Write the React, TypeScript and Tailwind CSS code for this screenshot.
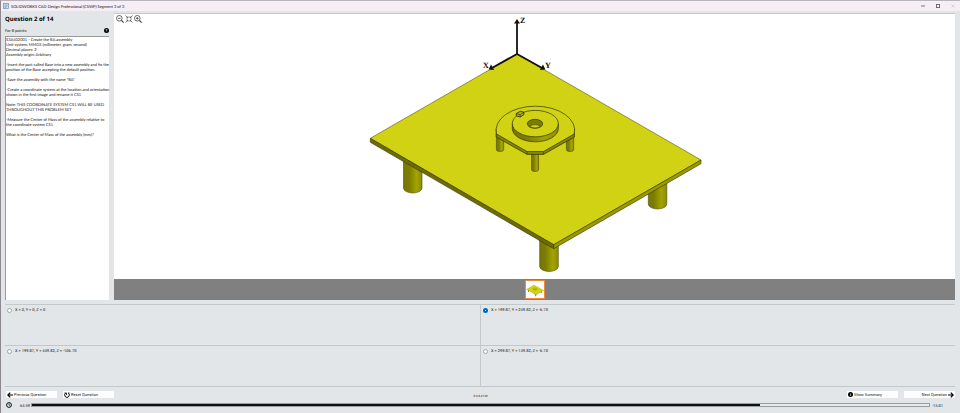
import { useState } from 'react';
import type { ReactNode } from 'react';

const ANSWERS = [
  'X = 0, Y = 0, Z = 0',
  'X = 199.87, Y = 249.82, Z = -6.70',
  'X = 199.87, Y = 449.82, Z = -106.70',
  'X = 299.87, Y = 149.82, Z = -6.70',
];

const QUESTION = `S3A402001 - Create the RA assembly
Unit system: MMGS (millimeter, gram, second)
Decimal places: 2
Assembly origin: Arbitrary

-Insert the part called Base into a new assembly and fix the
position of the Base accepting the default position.

-Save the assembly with the name "RA"

-Create a coordinate system at the location and orientation
shown in the first image and rename it CS1

Note: THIS COORDINATE SYSTEM CS1 WILL BE USED
THROUGHOUT THIS PROBLEM SET

-Measure the Center of Mass of the assembly relative to
the coordinate system CS1

What is the Center of Mass of the assembly (mm)?`;

function Leg({ x, top, width, bottom, ry }: { x: number; top: number; width: number; bottom: number; ry: number }) {
  const r = width / 2;
  return (
    <path
      d={`M${x} ${top}V${bottom - ry}A${r} ${ry} 0 0 0 ${x + width} ${bottom - ry}V${top}Z`}
      fill="url(#leg)"
      stroke="#4a4a08"
      strokeWidth="0.6"
    />
  );
}

function Assembly() {
  return (
    <g strokeLinejoin="round">
      <Leg x={403.5} top={155} width={18.5} bottom={193} ry={5} />
      <Leg x={539.7} top={236} width={18.6} bottom={271.5} ry={5} />
      <Leg x={648.3} top={180} width={18.5} bottom={209} ry={5} />
      <path d="M370.3 138.3 517 54l184 106L553.7 244.7Z" fill="#d1d214" stroke="#55550c" strokeWidth="0.6" />
      <path d="M370.3 138.3v4L553.7 248.7v-4Z" fill="#6d6d00" stroke="#33330a" strokeWidth="0.6" />
      <path d="M553.7 244.7v4L701 163.7V160Z" fill="#9b9b00" stroke="#33330a" strokeWidth="0.6" />

      <Leg x={496.4} top={133} width={7.3} bottom={151.5} ry={2} />
      <Leg x={566.4} top={133} width={7.3} bottom={151.5} ry={2} />
      <Leg x={531.5} top={150} width={7.1} bottom={171.5} ry={2} />
      <path
        d="M496.2 129v8L527 154.4h16.5L574.4 137v-8Z"
        fill="#858500"
        stroke="#33330a"
        strokeWidth="0.7"
      />
      {/* top face of the flange: round at the back, chamfered at the front */}
      <path
        d="M496.6 134A39.3 24 0 1 1 574.2 134L543.5 151.5H527Z"
        fill="#d1d214"
        stroke="#33330a"
        strokeWidth="0.7"
      />
      <path d="M527 151.5v3M543.5 151.5v3" stroke="#33330a" strokeWidth="0.6" />
      <path d="M512.3 123.6v5a23 13.2 0 0 0 46 0v-5Z" fill="url(#leg)" stroke="#33330a" strokeWidth="0.7" />
      <ellipse cx="535.3" cy="123.6" rx="23" ry="13.2" fill="#d1d214" stroke="#33330a" strokeWidth="0.7" />
      <ellipse cx="535" cy="123.8" rx="7.7" ry="4.5" fill="#7c7c00" stroke="#33330a" strokeWidth="0.7" />
      <path d="M529.5 126.2q5.5-3.2 11 0q-5.5 3.4-11 0Z" fill="#d1d214" stroke="#33330a" strokeWidth="0.5" />
      <path d="m516.3 113.5 4-2.2 3.5.9v2.6l-3.7 2.2-3.8-1.2Z" fill="#b5b60c" stroke="#222205" strokeWidth="0.8" />
      <path d="m516.3 113.5 3.8 1.2 3.7-2.3M520.1 114.7v2.3" fill="none" stroke="#222205" strokeWidth="0.6" />
    </g>
  );
}

function Drawing() {
  return (
    <svg viewBox="114 14 841 265" className="h-full w-full" role="img" aria-label="RA assembly">
      <defs>
        <linearGradient id="leg">
          <stop offset="0" stopColor="#77770a" />
          <stop offset="0.3" stopColor="#7c7c00" />
          <stop offset="0.7" stopColor="#a3a300" />
          <stop offset="1" stopColor="#8d8d00" />
        </linearGradient>
      </defs>
      <Assembly />
      <g stroke="#111" strokeWidth="1.8" fill="none">
        <path d="M517 54V22" />
        <path d="M517 54 491 68.5" />
        <path d="M517 54 543 68.5" />
      </g>
      <g fill="#111">
        <path d="m517 19 3 4.5h-6Z" />
        <path d="m488.6 69.6 2.4-5 3.2 5.3Z" />
        <path d="m545.4 69.6-2.4-5-3.2 5.3Z" />
      </g>
      <g fill="#111" className="font-['Liberation_Serif',serif] text-[8px] font-bold">
        <text x="520" y="23">Z</text>
        <text x="483" y="68">X</text>
        <text x="545" y="68">Y</text>
      </g>
    </svg>
  );
}

function Magnifier({ plus = false }: { plus?: boolean }) {
  return (
    <svg viewBox="0 0 8 8" className="size-2" fill="none" stroke="#444" strokeWidth="0.8">
      <circle cx="3.3" cy="3.3" r="2.8" />
      <path d="M2 3.3h2.6" />
      {plus && <path d="M3.3 2v2.6" />}
      <path d="m5.4 5.4 2.2 2.2" strokeWidth="1.2" />
    </svg>
  );
}

function FitIcon() {
  return (
    <svg viewBox="0 0 8 8" className="size-2" fill="none" stroke="#444" strokeWidth="0.7">
      <path d="M.5.5 3 3M7.5.5 5 3M.5 7.5 3 5M7.5 7.5 5 5" />
      <path d="M1.2 3H3V1.2M6.8 3H5V1.2M1.2 5H3v1.8M6.8 5H5v1.8" strokeWidth="0.6" />
    </svg>
  );
}

function ArrowIcon({ right = false }: { right?: boolean }) {
  return (
    <svg viewBox="0 0 6 6" className={right ? 'size-[6px] rotate-180' : 'size-[6px]'} fill="none" stroke="#000" strokeWidth="1.2">
      <path d="M6 3H.9M3.2.6.8 3l2.4 2.4" />
    </svg>
  );
}

function FooterButton({ children, end = false }: { children: ReactNode; end?: boolean }) {
  return (
    <button
      type="button"
      className={`flex h-[7px] w-[51px] items-center gap-px bg-[#fdfdfd] px-px whitespace-nowrap ${end ? 'justify-end' : ''}`}
    >
      {children}
    </button>
  );
}

export default function App() {
  const [selected, setSelected] = useState(1);

  return (
    <div className="flex h-screen flex-col border-t border-l border-t-[#b9b3bd] border-l-[#8d8790] bg-[#e2e6e9] font-[Roboto,sans-serif] text-[4px] leading-[5px] text-[#111] [text-rendering:geometricPrecision]">
      <header className="flex h-[10px] shrink-0 items-center bg-[#f5eef5] pl-[2px] font-[Lato,sans-serif]">
        <svg viewBox="0 0 6 6" className="size-[6px]">
          <rect x="0.5" y="0.5" width="5" height="5" fill="#dbe9f5" stroke="#6c8fae" strokeWidth="0.7" />
          <path d="M1.5 2h3M1.5 3.2h3M1.5 4.4h2" stroke="#4b7fae" strokeWidth="0.6" />
        </svg>
        <h1 className="ml-[2px]">SOLIDWORKS CAD Design Professional (CSWP) Segment 3 of 3</h1>
        <div className="ml-auto flex gap-[11px] pr-[5px]">
          <button type="button" aria-label="Minimize">
            <svg viewBox="0 0 4 4" className="size-1" stroke="#555" strokeWidth="0.8"><path d="M0 2h4" /></svg>
          </button>
          <button type="button" aria-label="Maximize">
            <svg viewBox="0 0 4 4" className="size-1" fill="none" stroke="#555" strokeWidth="0.8"><rect x="0.4" y="0.4" width="3.2" height="3.2" /></svg>
          </button>
          <button type="button" aria-label="Close" disabled>
            <svg viewBox="0 0 4 4" className="size-1" stroke="#c9c0c9" strokeWidth="0.6"><path d="m.5.5 3 3m0-3-3 3" /></svg>
          </button>
        </div>
      </header>

      <main className="flex min-h-0 flex-1 gap-[5px] pr-[5px] pl-1">
        <aside className="flex w-[104px] shrink-0 flex-col font-[Lato,sans-serif]">
          <h2 className="mt-1 font-['Open_Sans',sans-serif] text-[6px] leading-[8px] font-bold text-black">Question 2 of 14</h2>
          <div className="mt-1 flex h-[6px] items-center justify-between">
            <span>For 8 points:</span>
            <button type="button" aria-label="Help" className="flex size-[5px] items-center justify-center rounded-full bg-black text-[4px] font-bold text-white">
              ?
            </button>
          </div>
          <div className="mt-[3px] flex-1 border-t border-l border-[#999] bg-white leading-[5px] whitespace-pre">
            {QUESTION}
          </div>
        </aside>

        <section className="mt-[2px] flex min-w-0 flex-1 flex-col border-t border-[#c5cacd]">
          <div className="relative min-h-0 flex-1 bg-white">
            <Drawing />
            <div className="absolute top-px left-[2px] flex gap-px">
              <button type="button" aria-label="Zoom out"><Magnifier /></button>
              <button type="button" aria-label="Fit"><FitIcon /></button>
              <button type="button" aria-label="Zoom in"><Magnifier plus /></button>
            </div>
          </div>
          <div className="flex h-[21px] shrink-0 justify-center bg-[#808080] py-px">
            <button type="button" aria-label="Image 1" className="w-5 border border-[#ed8b3d] bg-white">
              <svg viewBox="365 10 340 270" className="h-full w-full"><Assembly /></svg>
            </button>
          </div>
        </section>
      </main>

      <fieldset className="mt-1 mr-[5px] ml-1 grid shrink-0 grid-cols-2 border-b border-[#c3c8cb]">
        {ANSWERS.map((answer, i) => (
          <label key={answer} className="flex h-[41px] items-start gap-[3px] border-t border-[#c3c8cb] px-px pt-[2px] even:border-l">
            <input
              type="radio"
              name="answer"
              checked={selected === i}
              onChange={() => setSelected(i)}
              className="mt-px ml-px size-[5px] appearance-none rounded-full border border-[#a5a5a5] bg-white checked:border-2 checked:border-[#0067c0]"
            />
            {answer}
          </label>
        ))}
      </fieldset>

      <footer className="shrink-0 px-[5px] pt-1 pb-[2px]">
        <div className="flex items-start justify-between">
          <div className="flex gap-[6px]">
            <FooterButton><ArrowIcon />Previous Question</FooterButton>
            <FooterButton>
              <svg viewBox="0 0 6 6" className="size-[6px]" fill="none" stroke="#000" strokeWidth="1">
                <path d="M1.6 1.2A2.3 2.3 0 1 0 4.4 1.2" />
                <path d="M.5 1h2v2M5.5 1H4" strokeWidth="0.8" />
              </svg>
              Reset Question
            </FooterButton>
          </div>
          <span className="pt-[3px] text-[3px] leading-[5px]">8.0.4.2138</span>
          <div className="flex gap-[6px]">
            <FooterButton>
              <span className="flex size-[5px] items-center justify-center rounded-full bg-black font-bold text-white">i</span>
              Show Summary
            </FooterButton>
            <FooterButton end>Next Question<ArrowIcon right /></FooterButton>
          </div>
        </div>
        <div className="flex h-3 items-center">
          <svg viewBox="0 0 6 6" className="size-[6px]" fill="none" stroke="#111" strokeWidth="1">
            <circle cx="3" cy="3" r="2.4" />
            <path d="M3 1.5V3l1 .8" strokeWidth="0.7" />
          </svg>
          <span className="w-[19px] pr-px text-right">64:59</span>
          <div className="h-1 flex-1 border border-[#9a9da0] bg-[#e6e9eb]">
            <div className="h-full bg-[#101010]" style={{ width: `${(729 / 898) * 100}%` }} />
          </div>
          <span className="w-[25px] pl-[2px]">-15:01</span>
        </div>
      </footer>
    </div>
  );
}
